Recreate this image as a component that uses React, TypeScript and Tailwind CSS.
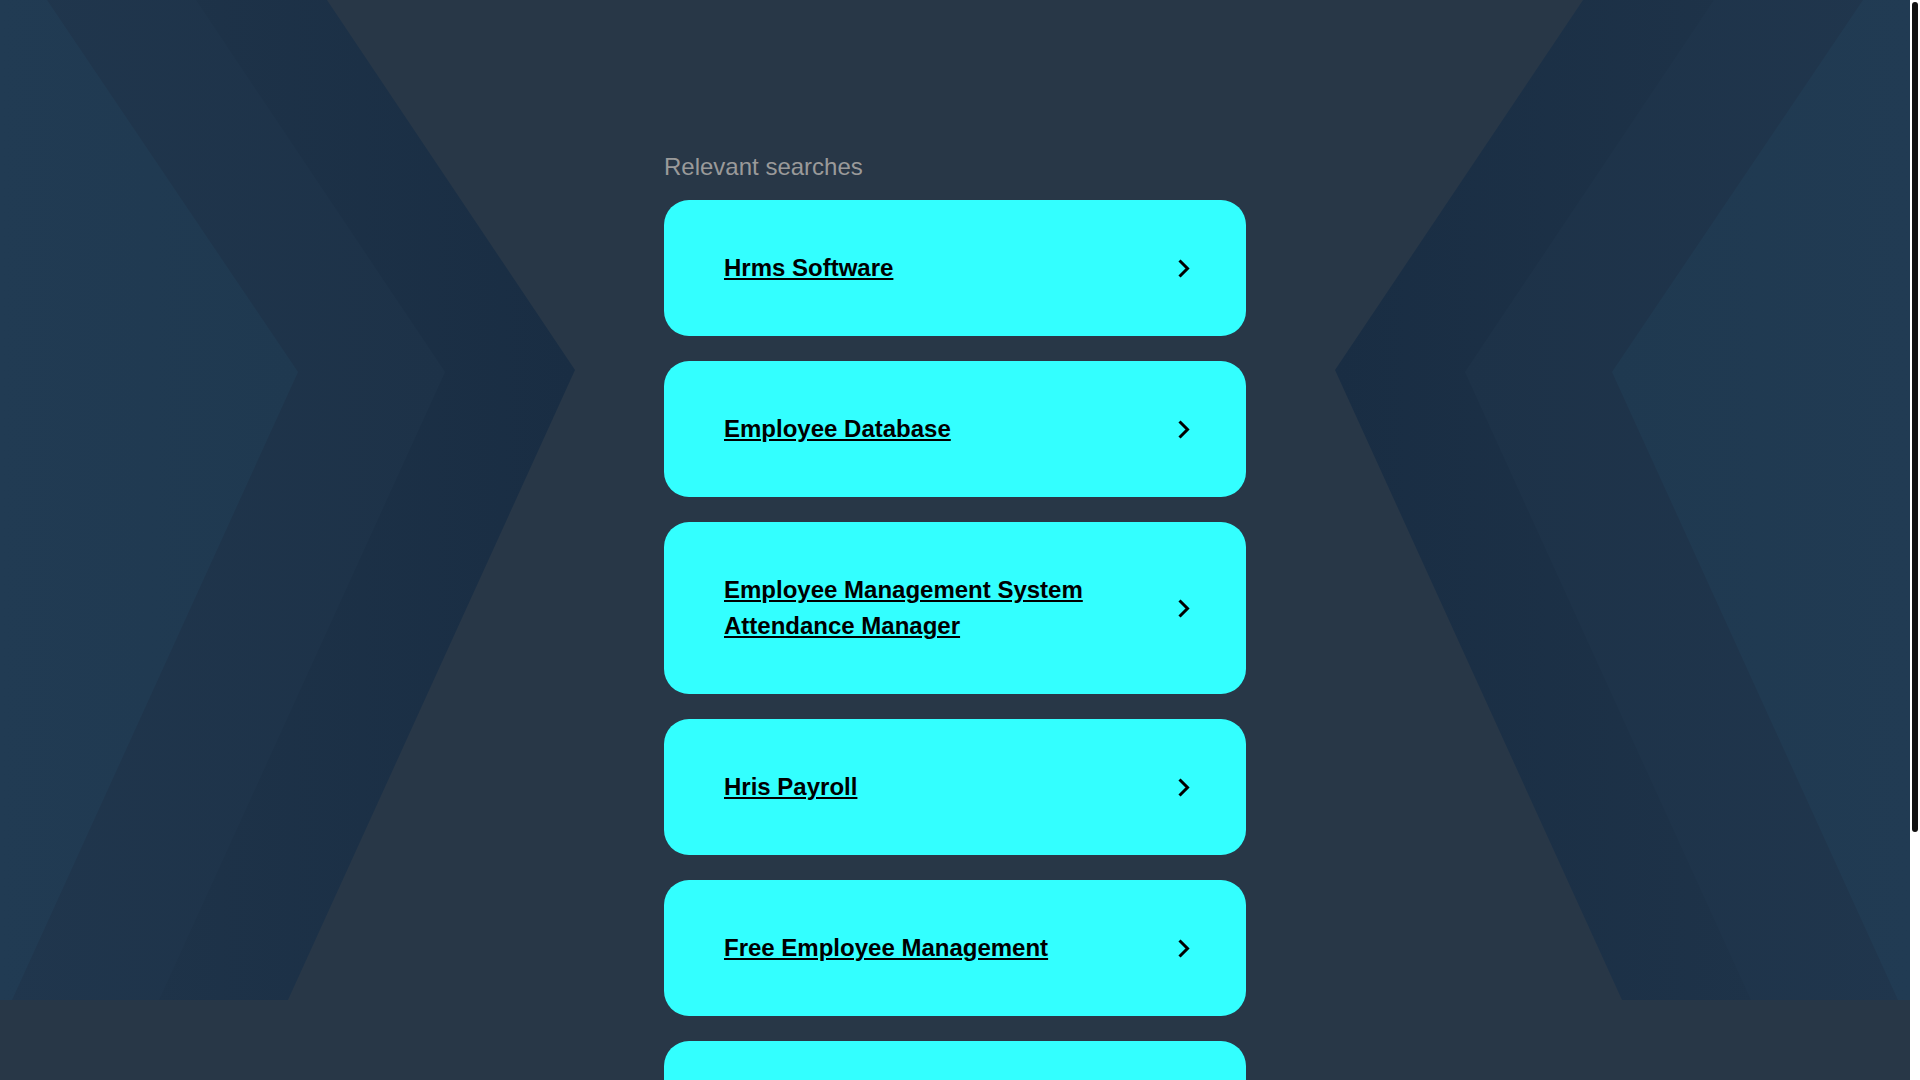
import React from "react";

const items = [
  "Hrms Software",
  "Employee Database",
  "Employee Management System Attendance Manager",
  "Hris Payroll",
  "Free Employee Management",
  "Employee Scheduling Software",
  "Hr Management Software",
];

function Background() {
  const L = (pts: number[][]) => pts.map((p) => p.join(",")).join(" ");
  const R = (pts: number[][]) => pts.map((p) => [1910 - p[0], p[1]].join(",")).join(" ");
  const outer = [[0, 0], [327, 0], [575, 370], [288, 1000], [0, 1000]];
  const middle = [[0, 0], [196, 0], [445, 372], [159, 1000], [0, 1000]];
  const inner = [[0, 0], [47, 0], [298, 372], [12, 1000], [0, 1000]];
  return (
    <svg
      className="absolute left-0 top-0 w-full h-[1000px]"
      viewBox="0 0 1910 1000"
      preserveAspectRatio="none"
    >
      <defs>
        <linearGradient id="gOL" gradientUnits="userSpaceOnUse" x1="150" y1="0" x2="575" y2="0">
          <stop offset="0" stopColor="#1e3349" />
          <stop offset="1" stopColor="#192d43" />
        </linearGradient>
        <linearGradient id="gML" gradientUnits="userSpaceOnUse" x1="0" y1="0" x2="445" y2="0">
          <stop offset="0" stopColor="#20364d" />
          <stop offset="1" stopColor="#1d3248" />
        </linearGradient>
        <linearGradient id="gIL" gradientUnits="userSpaceOnUse" x1="0" y1="0" x2="298" y2="0">
          <stop offset="0" stopColor="#213b53" />
          <stop offset="1" stopColor="#1f3950" />
        </linearGradient>
        <linearGradient id="gOR" gradientUnits="userSpaceOnUse" x1="1760" y1="0" x2="1335" y2="0">
          <stop offset="0" stopColor="#1e3349" />
          <stop offset="1" stopColor="#192d43" />
        </linearGradient>
        <linearGradient id="gMR" gradientUnits="userSpaceOnUse" x1="1910" y1="0" x2="1465" y2="0">
          <stop offset="0" stopColor="#20364d" />
          <stop offset="1" stopColor="#1d3248" />
        </linearGradient>
        <linearGradient id="gIR" gradientUnits="userSpaceOnUse" x1="1910" y1="0" x2="1612" y2="0">
          <stop offset="0" stopColor="#213b53" />
          <stop offset="1" stopColor="#1f3950" />
        </linearGradient>
      </defs>
      <polygon points={L(outer)} fill="url(#gOL)" />
      <polygon points={L(middle)} fill="url(#gML)" />
      <polygon points={L(inner)} fill="url(#gIL)" />
      <polygon points={R(outer)} fill="url(#gOR)" />
      <polygon points={R(middle)} fill="url(#gMR)" />
      <polygon points={R(inner)} fill="url(#gIR)" />
    </svg>
  );
}

function Chevron() {
  return (
    <svg width="14" height="21" viewBox="0 0 14 21" className="shrink-0">
      <polyline
        points="2.5,2.5 10.5,10.5 2.5,18.5"
        fill="none"
        stroke="#000"
        strokeWidth="3"
        strokeLinecap="butt"
        strokeLinejoin="miter"
      />
    </svg>
  );
}

export default function App() {
  return (
    <div
      className="flex h-screen w-full overflow-hidden"
      style={{ fontFamily: '"Liberation Sans", Arial, sans-serif' }}
    >
      <div className="relative flex-1 overflow-hidden bg-[#283747]">
        <Background />
        <div className="relative mx-auto w-[582px] pt-[149px] pb-[67px]">
          <h2 className="text-[24px] leading-9 font-normal text-[#9a9a9a] mb-[15px]">
            Relevant searches
          </h2>
          <div className="flex flex-col gap-[25px]">
            {items.map((t) => (
              <a
                key={t}
                href="#"
                className="flex items-center justify-between rounded-[25px] bg-[#33ffff] pl-[60px] pr-[55px] py-[50px]"
              >
                <span className="flex-1 pr-[40px] text-[24px] leading-9 font-bold text-black underline">
                  {t}
                </span>
                <Chevron />
              </a>
            ))}
          </div>
        </div>
      </div>
      <div className="flex w-[10px] shrink-0 justify-center bg-white pt-[2px]">
        <div className="h-[830px] w-[6px] rounded-full bg-[#111111]" />
      </div>
    </div>
  );
}
